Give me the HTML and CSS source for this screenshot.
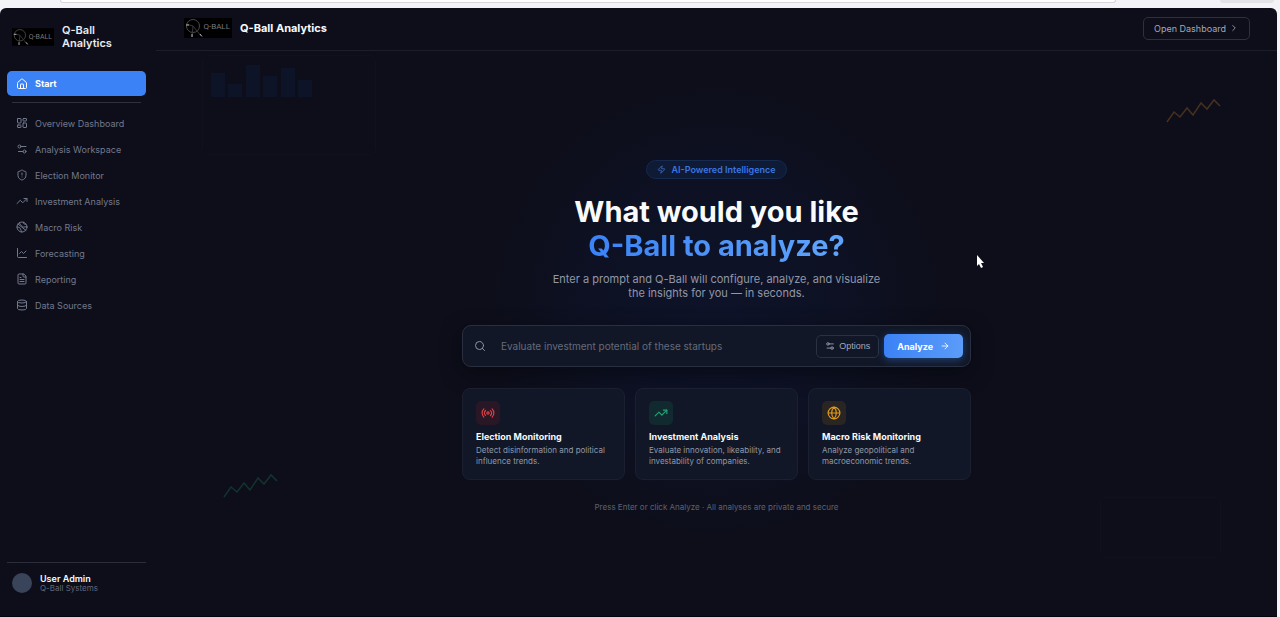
FILE: index.html
```html
<!DOCTYPE html>
<html lang="en">
<head>
    <meta charset="UTF-8">
    <meta name="viewport" content="width=device-width, initial-scale=1.0">
    <title>Q-Ball Analytics</title>
    <link rel="stylesheet" href="styles.css">
</head>
<body>
    <!-- shared icons -->
    <svg class="sprite" aria-hidden="true">
        <symbol id="logo" viewBox="0 0 48 20">
            <rect width="48" height="20" fill="#000"/>
            <circle cx="9" cy="8" r="6.500" fill="none" stroke="#4a4a4e" stroke-width="1"/>
            <path d="M9 8l8 10M9 8l-1 11M9 8L2 6" fill="none" stroke="#38383c" stroke-width="1"/>
            <path d="M2 7h3M8 16v3M16 16l2 2.500" stroke="#b5b5b8" stroke-width="1"/>
        </symbol>
        <symbol id="home" viewBox="0 0 24 24">
            <path d="M15 21v-8a1 1 0 0 0-1-1h-4a1 1 0 0 0-1 1v8"/>
            <path d="M3 10a2 2 0 0 1 .7-1.500l7-6a2 2 0 0 1 2.600 0l7 6A2 2 0 0 1 21 10v9a2 2 0 0 1-2 2H5a2 2 0 0 1-2-2z"/>
        </symbol>
        <symbol id="dashboard" viewBox="0 0 24 24">
            <rect x="3" y="3" width="7" height="9" rx="1"/>
            <rect x="14" y="3" width="7" height="5" rx="1"/>
            <rect x="14" y="12" width="7" height="9" rx="1"/>
            <rect x="3" y="16" width="7" height="5" rx="1"/>
        </symbol>
        <symbol id="sliders" viewBox="0 0 24 24">
            <path d="M20 7h-9M14 17H5"/>
            <circle cx="17" cy="17" r="3"/>
            <circle cx="7" cy="7" r="3"/>
        </symbol>
        <symbol id="shield" viewBox="0 0 24 24">
            <path d="M20 13c0 5-3.500 7.500-7.700 9a1 1 0 0 1-.6 0C7.500 20.500 4 18 4 13V6a1 1 0 0 1 1-1c2 0 4.500-1.200 6.200-2.700a1.200 1.200 0 0 1 1.600 0C14.500 3.800 17 5 19 5a1 1 0 0 1 1 1z"/>
            <path d="M12 8v4M12 16h.01"/>
        </symbol>
        <symbol id="trend" viewBox="0 0 24 24">
            <path d="M22 7l-8.500 8.500-5-5L2 17"/>
            <path d="M16 7h6v6"/>
        </symbol>
        <symbol id="earth" viewBox="0 0 24 24">
            <circle cx="12" cy="12" r="10"/>
            <path d="M4 6l16 13M7 3.500c0 5 4 4 5 7s5 1 9.500 1M2 12c4 0 6 1 7 4s2 3 2 6M15 2.500c-1 3 1 4 5 4"/>
        </symbol>
        <symbol id="chart" viewBox="0 0 24 24">
            <path d="M3 3v16a2 2 0 0 0 2 2h16"/>
            <path d="M7 13l4-4 4 4 5-5"/>
        </symbol>
        <symbol id="file" viewBox="0 0 24 24">
            <path d="M15 2H6a2 2 0 0 0-2 2v16a2 2 0 0 0 2 2h12a2 2 0 0 0 2-2V7z"/>
            <path d="M14 2v4a2 2 0 0 0 2 2h4M10 9H8M16 13H8M16 17H8"/>
        </symbol>
        <symbol id="database" viewBox="0 0 24 24">
            <ellipse cx="12" cy="5" rx="9" ry="3"/>
            <path d="M3 5v14a9 3 0 0 0 18 0V5M3 12a9 3 0 0 0 18 0"/>
        </symbol>
        <symbol id="chevron" viewBox="0 0 24 24">
            <path d="M9 18l6-6-6-6"/>
        </symbol>
        <symbol id="zap" viewBox="0 0 24 24">
            <path d="M4 14a1 1 0 0 1-.8-1.600l9.900-10.200a.5.5 0 0 1 .9.500L12 8.700a1 1 0 0 0 1 1.300h7a1 1 0 0 1 .8 1.600l-9.900 10.200a.5.5 0 0 1-.9-.5l2-6a1 1 0 0 0-1-1.300z"/>
        </symbol>
        <symbol id="search" viewBox="0 0 24 24">
            <circle cx="11" cy="11" r="8"/>
            <path d="M21 21l-4.300-4.300"/>
        </symbol>
        <symbol id="arrow" viewBox="0 0 24 24">
            <path d="M5 12h14M12 5l7 7-7 7"/>
        </symbol>
        <symbol id="radio" viewBox="0 0 24 24">
            <path d="M4.900 19.100C1 15.200 1 8.800 4.900 4.900M7.800 16.200c-2.300-2.300-2.300-6.100 0-8.500M16.200 7.800c2.300 2.300 2.300 6.100 0 8.500M19.100 4.900C23 8.800 23 15.100 19.100 19"/>
            <circle cx="12" cy="12" r="2"/>
        </symbol>
        <symbol id="globe" viewBox="0 0 24 24">
            <circle cx="12" cy="12" r="10"/>
            <path d="M12 2a14.500 14.500 0 0 0 0 20 14.500 14.500 0 0 0 0-20M2 12h20"/>
        </symbol>
        <symbol id="spark" viewBox="0 0 56 26">
            <path d="M1 24l7-10 6 5 7-9 6 7 8-12 6 6 7-9 6 6"/>
        </symbol>
    </svg>

    <div class="browser-bar">
        <div class="address"></div>
        <div class="browser-btn"></div>
    </div>

    <div class="app">
        <aside class="sidebar">
            <div class="brand">
                <div class="logo logo-small">
                    <svg><use href="#logo"/></svg>
                    <span>Q-BALL</span>
                </div>
                <div class="brand-name">Q-Ball Analytics</div>
            </div>

            <nav class="menu">
                <a class="menu-item active" href="#"><svg class="icon"><use href="#home"/></svg>Start</a>
                <hr>
                <a class="menu-item" href="#"><svg class="icon"><use href="#dashboard"/></svg>Overview Dashboard</a>
                <a class="menu-item" href="#"><svg class="icon"><use href="#sliders"/></svg>Analysis Workspace</a>
                <a class="menu-item" href="#"><svg class="icon"><use href="#shield"/></svg>Election Monitor</a>
                <a class="menu-item" href="#"><svg class="icon"><use href="#trend"/></svg>Investment Analysis</a>
                <a class="menu-item" href="#"><svg class="icon"><use href="#earth"/></svg>Macro Risk</a>
                <a class="menu-item" href="#"><svg class="icon"><use href="#chart"/></svg>Forecasting</a>
                <a class="menu-item" href="#"><svg class="icon"><use href="#file"/></svg>Reporting</a>
                <a class="menu-item" href="#"><svg class="icon"><use href="#database"/></svg>Data Sources</a>
            </nav>

            <div class="user">
                <div class="avatar"></div>
                <div>
                    <div class="user-name">User Admin</div>
                    <div class="user-org">Q-Ball Systems</div>
                </div>
            </div>
        </aside>

        <div class="content">
            <header class="topbar">
                <div class="logo">
                    <svg><use href="#logo"/></svg>
                    <span>Q-BALL</span>
                </div>
                <div class="topbar-title">Q-Ball Analytics</div>
                <button class="btn open-btn" type="button">Open Dashboard <svg class="icon"><use href="#chevron"/></svg></button>
            </header>

            <main class="hero">
                <!-- faint background shapes -->
                <div class="ghost-card ghost-bars">
                    <svg viewBox="0 0 102 34">
                        <path d="M0 9h14v24H0zM17 20h14v13H17zM35 1h14v32H35zM52 12h14v21H52zM70 4h14v29H70zM87 16h14v17H87z"/>
                    </svg>
                </div>
                <div class="ghost-card ghost-empty"></div>
                <svg class="spark spark-orange"><use href="#spark"/></svg>
                <svg class="spark spark-green"><use href="#spark"/></svg>

                <div class="hero-inner">
                    <div class="pill"><svg class="icon"><use href="#zap"/></svg>AI-Powered Intelligence</div>
                    <h1>What would you like<br><span>Q-Ball to analyze?</span></h1>
                    <p class="lead">Enter a prompt and Q-Ball will configure, analyze, and visualize<br>the insights for you — in seconds.</p>

                    <form class="prompt">
                        <label for="prompt-input" aria-label="Prompt"><svg class="icon"><use href="#search"/></svg></label>
                        <input id="prompt-input" type="text" placeholder="Evaluate investment potential of these startups">
                        <button class="btn options-btn" type="button"><svg class="icon"><use href="#sliders"/></svg>Options</button>
                        <button class="btn analyze-btn" type="button">Analyze <svg class="icon"><use href="#arrow"/></svg></button>
                    </form>

                    <div class="cards">
                        <a class="card" href="#">
                            <div class="card-icon red"><svg class="icon"><use href="#radio"/></svg></div>
                            <h2>Election Monitoring</h2>
                            <p>Detect disinformation and political influence trends.</p>
                        </a>
                        <a class="card" href="#">
                            <div class="card-icon green"><svg class="icon"><use href="#trend"/></svg></div>
                            <h2>Investment Analysis</h2>
                            <p>Evaluate innovation, likeability, and investability of companies.</p>
                        </a>
                        <a class="card" href="#">
                            <div class="card-icon orange"><svg class="icon"><use href="#globe"/></svg></div>
                            <h2>Macro Risk Monitoring</h2>
                            <p>Analyze geopolitical and macroeconomic trends.</p>
                        </a>
                    </div>

                    <p class="hint">Press Enter or click Analyze · All analyses are private and secure</p>
                </div>

                <svg class="cursor" viewBox="0 0 8 14"><path d="M1 1v11l2-2 2 4 2-1-2-4h3z"/></svg>
            </main>
        </div>
    </div>
</body>
</html>
```
FILE: styles.css
```css
* {
    box-sizing: border-box;
}

body {
    margin: 0;
    height: 100vh;
    display: flex;
    flex-direction: column;
    background: #f4f3f7;
    font-family: Inter, "Liberation Sans", sans-serif;
    color: #f8fafc;
    overflow: hidden;
}

a {
    color: inherit;
    text-decoration: none;
}

h1, h2, p {
    margin: 0;
}

.sprite {
    position: absolute;
    width: 0;
    height: 0;
}

.icon {
    width: 12px;
    height: 12px;
    flex: none;
    fill: none;
    stroke: currentColor;
    stroke-width: 2;
    stroke-linecap: round;
    stroke-linejoin: round;
}

/* strip of browser above the app */
.browser-bar {
    height: 8px;
    flex: none;
    display: flex;
    justify-content: space-between;
    padding: 0 6px 0 60px;
}

.address {
    width: 1056px;
    height: 3px;
    background: #fff;
    border: 1px solid #d9d5dc;
    border-top: none;
    border-radius: 0 0 6px 6px;
}

.browser-btn {
    width: 54px;
    height: 3px;
    background: #e4e3e8;
    border-radius: 0 0 6px 6px;
}

.app {
    flex: 1;
    min-height: 0;
    display: flex;
    margin-right: 3px;
    background: #0d0e1a;
    border-radius: 6px 6px 0 0;
    border-bottom: 1px solid #04040c;
    overflow: hidden;
}

/* sidebar */
.sidebar {
    width: 156px;
    flex: none;
    display: flex;
    flex-direction: column;
    padding: 16px 10px 23px 7px;
}

.brand {
    display: flex;
    align-items: center;
    gap: 8px;
    padding: 0 5px;
    margin-bottom: 21px;
}

.brand-name {
    flex: 1;
    font-size: 11px;
    font-weight: 600;
    line-height: 13px;
    color: #e8eaf0;
}

.logo {
    position: relative;
    width: 48px;
    height: 20px;
    flex: none;
}

.logo svg {
    display: block;
    width: 100%;
    height: 100%;
}

.logo span {
    position: absolute;
    right: 2px;
    top: 3px;
    font-family: Roboto, sans-serif;
    font-size: 8px;
    line-height: 12px;
    color: #77777c;
}

.logo-small {
    width: 42px;
    height: 18px;
}

.logo-small span {
    font-size: 7px;
}

.menu {
    display: flex;
    flex-direction: column;
    font-size: 9px;
    color: #73798c;
}

.menu-item {
    display: flex;
    align-items: center;
    gap: 7px;
    height: 26px;
    padding: 0 9px;
}

.menu-item.active {
    height: 25px;
    background: #3b82f6;
    border-radius: 5px;
    color: #fff;
    font-weight: bold;
}

.menu hr {
    width: 129px;
    margin: 6px 5px 7px;
    border: none;
    border-top: 1px solid #2f303c;
}

.user {
    display: flex;
    align-items: center;
    gap: 8px;
    margin-top: auto;
    padding: 10px 5px 0;
    border-top: 1px solid #2b2d3a;
}

.avatar {
    width: 20px;
    height: 20px;
    border-radius: 50%;
    background: #39445a;
}

.user-name {
    font-size: 9px;
    font-weight: 600;
    line-height: 11px;
}

.user-org {
    font-size: 8px;
    line-height: 9px;
    color: #61677a;
}

/* main column */
.content {
    flex: 1;
    display: flex;
    flex-direction: column;
}

.topbar {
    height: 43px;
    flex: none;
    display: flex;
    align-items: center;
    gap: 8px;
    padding: 0 27px 2px 28px;
    border-bottom: 1px solid #1c1e2a;
}

.topbar-title {
    font-size: 11px;
    font-weight: 700;
}

.btn {
    display: flex;
    align-items: center;
    justify-content: center;
    border: 1px solid #2b3140;
    border-radius: 5px;
    background: transparent;
    color: #a3a9b8;
    font-family: inherit;
    font-size: 9px;
    cursor: pointer;
}

.btn .icon {
    width: 10px;
    height: 10px;
}

.open-btn {
    margin-left: auto;
    height: 23px;
    padding: 0 10px;
    gap: 3px;
}

.hero {
    position: relative;
    flex: 1;
    display: flex;
    align-items: center;
    justify-content: center;
    padding-top: 6px;
    background: radial-gradient(circle at 50% 46%, #0e1329 0, #0d1123 130px, #0d0e1a 230px);
}

.hero-inner {
    position: relative;
    width: 509px;
    display: flex;
    flex-direction: column;
    align-items: center;
    text-align: center;
}

.pill {
    display: flex;
    align-items: center;
    gap: 5px;
    height: 19px;
    padding: 0 10px;
    border: 1px solid #16294f;
    border-radius: 10px;
    background: #0f1a34;
    color: #3b76e0;
    font-size: 9px;
    font-weight: 600;
}

.pill .icon {
    width: 9px;
    height: 9px;
}

h1 {
    margin-top: 16px;
    font-size: 29px;
    font-weight: 700;
    line-height: 34px;
}

h1 span {
    background: linear-gradient(90deg, #3b82f6, #60a5fa);
    -webkit-background-clip: text;
    background-clip: text;
    color: transparent;
}

.lead {
    margin-top: 9px;
    font-size: 11px;
    line-height: 14px;
    color: #9197a6;
}

.prompt {
    display: flex;
    align-items: center;
    width: 100%;
    height: 42px;
    margin-top: 25px;
    padding: 0 7px 0 11px;
    border: 1px solid #2a2f3f;
    border-radius: 9px;
    background: #111726;
    box-shadow: 0 6px 20px rgba(5, 6, 14, 0.6);
}

.prompt label {
    display: flex;
    color: #8d94a5;
}

.prompt input {
    flex: 1;
    min-width: 0;
    padding: 0 15px;
    border: none;
    outline: none;
    background: transparent;
    color: #f8fafc;
    font-family: inherit;
    font-size: 10px;
}

.prompt input::placeholder {
    color: #646b7a;
    opacity: 1;
}

.options-btn {
    height: 23px;
    padding: 0 8px;
    gap: 4px;
    font-family: "Liberation Sans", Arial, sans-serif;
}

.analyze-btn {
    height: 24px;
    margin-left: 5px;
    padding: 0 13px;
    gap: 7px;
    border: none;
    background: linear-gradient(90deg, #3b82f6, #5b9cf9);
    box-shadow: 0 2px 8px rgba(59, 130, 246, 0.4);
    color: #fff;
    font-weight: bold;
}

.cards {
    display: grid;
    grid-template-columns: repeat(3, 1fr);
    gap: 10px;
    width: 100%;
    margin-top: 21px;
}

.card {
    padding: 12px 13px;
    border: 1px solid #1b2030;
    border-radius: 8px;
    background: #111726;
    text-align: left;
}

.card-icon {
    display: flex;
    align-items: center;
    justify-content: center;
    width: 24px;
    height: 24px;
    border-radius: 5px;
}

.card-icon .icon {
    width: 14px;
    height: 14px;
}

.red {
    background: #2a1725;
    color: #dc4048;
}

.green {
    background: #102a2f;
    color: #25a276;
}

.orange {
    background: #292522;
    color: #e09a1c;
}

.card h2 {
    margin-top: 5px;
    font-size: 9px;
    font-weight: 700;
    line-height: 14px;
}

.card p {
    margin-top: 1px;
    font-size: 8px;
    line-height: 11px;
    color: #9299a9;
}

.hint {
    margin-top: 21px;
    font-size: 8px;
    line-height: 12px;
    color: #5d6270;
}

/* background decoration */
.ghost-card {
    position: absolute;
    border: 1px solid #10111d;
    border-radius: 6px;
}

.ghost-bars {
    left: 46px;
    top: 4px;
    width: 174px;
    height: 100px;
    padding: 8px;
}

.ghost-bars svg {
    display: block;
    width: 102px;
    height: 34px;
    fill: #0d1427;
}

.ghost-empty {
    right: 56px;
    bottom: 58px;
    width: 121px;
    height: 61px;
}

.spark {
    position: absolute;
    width: 56px;
    height: 26px;
    fill: none;
    stroke-width: 1.500;
}

.spark-orange {
    right: 55px;
    top: 47px;
    stroke: #47301f;
}

.spark-green {
    left: 67px;
    bottom: 117px;
    stroke: #12332f;
}

.cursor {
    position: absolute;
    left: 820px;
    top: 203px;
    width: 8px;
    height: 14px;
    fill: #fff;
}
```
